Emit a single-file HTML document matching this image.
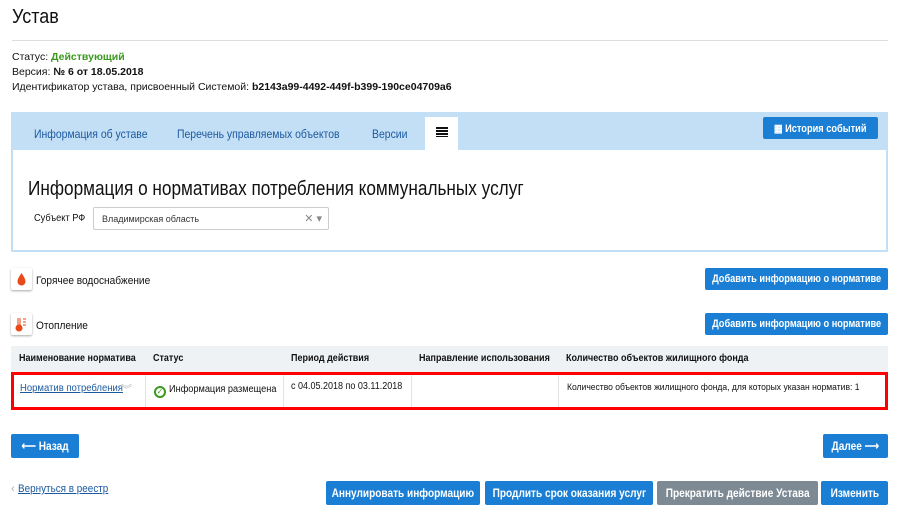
<!DOCTYPE html>
<html><head><meta charset="utf-8"><style>
*{box-sizing:border-box;margin:0;padding:0}
body{width:897px;height:516px;background:#fff;font-family:"Liberation Sans",sans-serif;color:#111;position:relative;overflow:hidden}
.a{position:absolute;white-space:nowrap}
.btn{position:absolute;background:#1a7fd4;color:#fff;font-weight:bold;font-size:12px;text-align:center;border-radius:2px;display:flex;align-items:center;justify-content:center;white-space:nowrap;overflow:hidden}
.btn span{display:inline-block;transform:scaleX(.84)}
.lnk{color:#1c5aa0;text-decoration:underline}
.th{position:absolute;top:346px;height:26px;font-size:10px;font-weight:bold;line-height:26px;padding-left:8px;white-space:nowrap}
.icon{position:absolute;width:21px;height:22px;background:#fff;border-radius:2px;box-shadow:0 1px 2px rgba(0,0,0,.35)}
.n{display:inline-block;transform-origin:0 0}
</style></head><body>
<div class="a" style="left:12px;top:6px;font-size:20px"><span class="n" style="transform:scaleX(.9)">Устав</span></div>
<div class="a" style="left:12px;top:40px;width:876px;height:1px;background:#ddd"></div>
<div class="a" style="left:12px;top:51px;font-size:10.5px">Статус: <b style="color:#3a9a1e">Действующий</b></div>
<div class="a" style="left:12px;top:66px;font-size:10.5px">Версия: <b>№ 6 от 18.05.2018</b></div>
<div class="a" style="left:12px;top:81px;font-size:10.5px">Идентификатор устава, присвоенный Системой: <b>b2143a99-4492-449f-b399-190ce04709a6</b></div>

<div class="a" style="left:11px;top:112px;width:877px;height:140px;background:#c3dff5"></div>
<div class="a" style="left:13px;top:150px;width:873px;height:100px;background:#fff"></div>
<div class="a" style="left:425px;top:117px;width:33px;height:34px;background:#fff"></div>
<div class="a" style="left:436px;top:127px;width:12px;height:10px;background:repeating-linear-gradient(#111 0 2px,transparent 2px 3px)"></div>
<div class="a lnk" style="left:34px;top:127px;font-size:12px"><span class="n" style="transform:scaleX(.87)">Информация об уставе</span></div>
<div class="a lnk" style="left:177px;top:127px;font-size:12px"><span class="n" style="transform:scaleX(.87)">Перечень управляемых объектов</span></div>
<div class="a lnk" style="left:372px;top:127px;font-size:12px"><span class="n" style="transform:scaleX(.87)">Версии</span></div>
<div class="btn" style="left:763px;top:117px;width:115px;height:22px;font-size:11px"><span>▦ История событий</span></div>
<div class="a" style="left:28px;top:178px;font-size:20px"><span class="n" style="transform:scaleX(.86)">Информация о нормативах потребления коммунальных услуг</span></div>
<div class="a" style="left:34px;top:212px;font-size:10.5px"><span class="n" style="transform:scaleX(.88)">Субъект РФ</span></div>
<div class="a" style="left:93px;top:207px;width:236px;height:23px;border:1px solid #ccc;border-radius:2px;font-size:9px;color:#333;padding:6px 8px">Владимирская область<span style="position:absolute;right:6px;top:4px;color:#888;font-size:11px">✕ ▾</span></div>

<div class="icon" style="left:11px;top:268px"><svg width="21" height="22"><path d="M10.5 5 C8 9 6.5 11 6.5 13.5 a4 4 0 0 0 8 0 C14.5 11 13 9 10.5 5z" fill="#e84a1a"/></svg></div>
<div class="a" style="left:36px;top:275px;font-size:11px"><span class="n" style="transform:scaleX(.92)">Горячее водоснабжение</span></div>
<div class="btn" style="left:705px;top:268px;width:183px;height:22px;font-size:11px"><span>Добавить информацию о нормативе</span></div>
<div class="icon" style="left:11px;top:313px"><svg width="21" height="22"><rect x="6" y="5" width="4" height="9" fill="#f3a08a"/><circle cx="8" cy="15" r="3.5" fill="#e84a1a"/><path d="M12 6h3M12 9h3M12 12h3" stroke="#e84a1a"/></svg></div>
<div class="a" style="left:36px;top:320px;font-size:11px"><span class="n" style="transform:scaleX(.92)">Отопление</span></div>
<div class="btn" style="left:705px;top:313px;width:183px;height:22px;font-size:11px"><span>Добавить информацию о нормативе</span></div>

<div class="a" style="left:11px;top:346px;width:877px;height:26px;background:#eff2f5"></div>
<div class="th" style="left:11px"><span class="n" style="transform:scaleX(.9)">Наименование норматива</span></div>
<div class="th" style="left:145px"><span class="n" style="transform:scaleX(.9)">Статус</span></div>
<div class="th" style="left:283px"><span class="n" style="transform:scaleX(.9)">Период действия</span></div>
<div class="th" style="left:411px"><span class="n" style="transform:scaleX(.9)">Направление использования</span></div>
<div class="th" style="left:558px"><span class="n" style="transform:scaleX(.9)">Количество объектов жилищного фонда</span></div>
<div class="a" style="left:145px;top:372px;width:1px;height:38px;background:#e3e3e3"></div>
<div class="a" style="left:283px;top:372px;width:1px;height:38px;background:#e3e3e3"></div>
<div class="a" style="left:411px;top:372px;width:1px;height:38px;background:#e3e3e3"></div>
<div class="a" style="left:558px;top:372px;width:1px;height:38px;background:#e3e3e3"></div>
<div class="a" style="left:20px;top:383px;font-size:10px"><span class="n lnk" style="transform:scaleX(.95)">Норматив потребления</span></div>
<div class="a" style="left:121px;top:381px;font-size:11px;color:#bbb">︾</div>
<div class="a" style="left:154px;top:384px;font-size:10px"><span style="display:inline-block;width:12px;height:12px;border:2px solid #3a9a1e;border-radius:50%;vertical-align:-2px;color:#3a9a1e;font-size:8px;line-height:8px;text-align:center">✓</span> <span class="n" style="transform:scaleX(.92)">Информация размещена</span></div>
<div class="a" style="left:291px;top:381px;font-size:10px"><span class="n" style="transform:scaleX(.9)">с 04.05.2018 по 03.11.2018</span></div>
<div class="a" style="left:567px;top:382px;font-size:9.5px"><span class="n" style="transform:scaleX(.9)">Количество объектов жилищного фонда, для которых указан норматив: 1</span></div>
<div class="a" style="left:11px;top:372px;width:877px;height:38px;border:3px solid #f00"></div>

<div class="btn" style="left:11px;top:434px;width:68px;height:24px"><span>⟵ Назад</span></div>
<div class="btn" style="left:823px;top:434px;width:65px;height:24px"><span>Далее ⟶</span></div>
<div class="a" style="left:11px;top:483px;font-size:11px"><span style="color:#aaa">‹</span> <span class="n lnk" style="transform:scaleX(.9)">Вернуться в реестр</span></div>
<div class="btn" style="left:326px;top:481px;width:154px;height:24px"><span>Аннулировать информацию</span></div>
<div class="btn" style="left:485px;top:481px;width:168px;height:24px"><span>Продлить срок оказания услуг</span></div>
<div class="btn" style="left:657px;top:481px;width:161px;height:24px;background:#7d8a94"><span>Прекратить действие Устава</span></div>
<div class="btn" style="left:821px;top:481px;width:67px;height:24px"><span>Изменить</span></div>
</body></html>
